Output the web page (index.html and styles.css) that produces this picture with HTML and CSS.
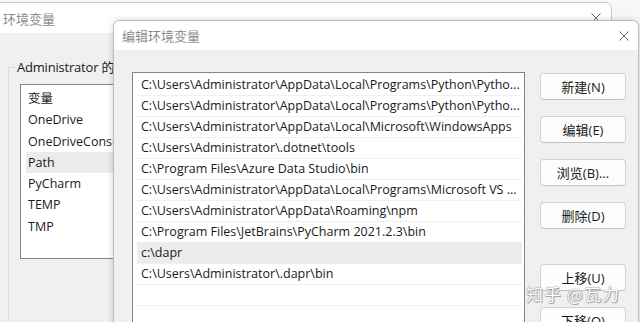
FILE: index.html
```html
<!DOCTYPE html>
<html lang="zh-CN">
<head>
<meta charset="utf-8">
<title>编辑环境变量</title>
<link rel="stylesheet" href="styles.css">
</head>
<body>
<div class="desktop">
  <section class="win win-back">
    <header class="titlebar">
      <span class="title">环境变量</span>
      <svg class="close" viewBox="0 0 10 10" width="10" height="10"><path d="M0.5 0.5L9.5 9.5M9.5 0.5L0.5 9.5" stroke="#6b6b6b" stroke-width="1" fill="none"/></svg>
    </header>
    <div class="body back-body">
      <fieldset class="group">
        <legend>Administrator 的用户变量</legend>
        <ul class="list back-list">
          <li class="row head">变量</li>
          <li class="row">OneDrive</li>
          <li class="row">OneDriveConsumer</li>
          <li class="row sel">Path</li>
          <li class="row">PyCharm</li>
          <li class="row">TEMP</li>
          <li class="row">TMP</li>
        </ul>
      </fieldset>
    </div>
  </section>

  <section class="win win-front">
    <header class="titlebar">
      <span class="title">编辑环境变量</span>
      <svg class="close" viewBox="0 0 10 10" width="10" height="10"><path d="M0.5 0.5L9.5 9.5M9.5 0.5L0.5 9.5" stroke="#6b6b6b" stroke-width="1" fill="none"/></svg>
    </header>
    <div class="body front-body">
      <ul class="list path-list">
        <li class="row">C:\Users\Administrator\AppData\Local\Programs\Python\Pytho...</li>
        <li class="row">C:\Users\Administrator\AppData\Local\Programs\Python\Pytho...</li>
        <li class="row">C:\Users\Administrator\AppData\Local\Microsoft\WindowsApps</li>
        <li class="row">C:\Users\Administrator\.dotnet\tools</li>
        <li class="row">C:\Program Files\Azure Data Studio\bin</li>
        <li class="row">C:\Users\Administrator\AppData\Local\Programs\Microsoft VS ...</li>
        <li class="row">C:\Users\Administrator\AppData\Roaming\npm</li>
        <li class="row">C:\Program Files\JetBrains\PyCharm 2021.2.3\bin</li>
        <li class="row sel">c:\dapr</li>
        <li class="row">C:\Users\Administrator\.dapr\bin</li>
        <li class="row"></li>
        <li class="row"></li>
      </ul>
      <div class="buttons">
        <button class="btn">新建(N)</button>
        <button class="btn">编辑(E)</button>
        <button class="btn">浏览(B)...</button>
        <button class="btn">删除(D)</button>
        <button class="btn btn-gap">上移(U)</button>
        <button class="btn">下移(O)</button>
      </div>
    </div>
  </section>

  <div class="watermark">知乎 @瓦力</div>
</div>
</body>
</html>
```
FILE: styles.css
```css
* { box-sizing: border-box; }
html, body { margin: 0; padding: 0; }
body {
  width: 640px;
  height: 322px;
  overflow: hidden;
  background: #f7f7f7;
  font-family: "Open Sans", "Noto Sans CJK SC", sans-serif;
  font-size: 12.5px;
  color: #1a1a1a;
}
.desktop {
  position: relative;
  width: 640px;
  height: 322px;
  overflow: hidden;
}
.win {
  position: absolute;
  display: flex;
  flex-direction: column;
  background: #f0f0f0;
  border: 1px solid #c9c9c9;
  border-radius: 7px 7px 0 0;
  overflow: hidden;
}
.win-back {
  left: -10px;
  top: 2px;
  width: 622px;
  height: 340px;
}
.win-front {
  left: 113px;
  top: 20px;
  width: 526px;
  height: 330px;
  box-shadow: 0 0 6px rgba(0,0,0,0.18);
  border-color: #bdbdbd;
}
.titlebar {
  flex: 0 0 auto;
  height: 29px;
  background: #ffffff;
  display: flex;
  align-items: center;
  justify-content: space-between;
}
.win-back .titlebar { padding: 0 10px 0 12px; height: 30px; }
.win-front .titlebar { padding: 0 9px 0 8px; height: 29px; }
.title {
  font-family: "Noto Sans CJK SC", sans-serif;
  font-size: 13px;
  color: #8c8c8c;
}
.close { display: block; }
.body { flex: 1 1 auto; }
.back-body { padding: 27px 0 0 17px; }
.group {
  margin: 0;
  padding: 9px 0 0 11px;
  border: 1px solid #dcdcdc;
  border-right: none;
  border-bottom: none;
  height: 260px;
  width: 200px;
}
.group legend {
  padding: 0 2px;
  margin-left: -5px;
  font-size: 13px;
  letter-spacing: -0.2px;
  color: #1a1a1a;
  line-height: 14px;
}
.list {
  list-style: none;
  margin: 0;
  padding: 0;
  background: #ffffff;
  border: 1px solid #858585;
}
.row {
  height: 21px;
  line-height: 21px;
  white-space: nowrap;
  overflow: hidden;
}
.back-list {
  width: 160px;
  height: 175px;
  padding: 3px 0 0 5px;
  margin-top: 1px;
  font-size: 12.5px;
}
.back-list .row { padding-left: 2px; height: 21.3px; line-height: 21.3px; }
.back-list .sel { background: #ebebeb; }
.front-body {
  display: flex;
  align-items: flex-start;
  padding: 22px 0 0 18px;
  gap: 15px;
}
.path-list {
  width: 393px;
  height: 300px;
  padding: 2px 2px 0 4px;
}
.path-list .row {
  padding-left: 4px;
  border-bottom: 1px solid #f0f0f0;
  height: 21px;
  line-height: 20px;
}
.path-list .sel { background: #ececec; }
.buttons {
  display: flex;
  flex-direction: column;
  gap: 16px;
  padding-top: 1px;
}
.btn {
  width: 86px;
  height: 27px;
  margin: 0;
  padding: 0;
  background: #fdfdfd;
  border: 1px solid #d2d2d2;
  border-bottom-color: #c2c2c2;
  border-radius: 4px;
  font-family: "Open Sans", "Noto Sans CJK SC", sans-serif;
  font-size: 13px;
  color: #1a1a1a;
}
.btn-gap { margin-top: 19px; }
.watermark {
  position: absolute;
  left: 526px;
  top: 281px;
  font-family: "Noto Sans CJK SC", sans-serif;
  font-size: 17px;
  color: #ffffff;
  letter-spacing: 1px;
  text-shadow: 0 0 1px #8a8a8a, 0 0 1px #8a8a8a, 1px 1px 0 #b0b0b0;
}
```
